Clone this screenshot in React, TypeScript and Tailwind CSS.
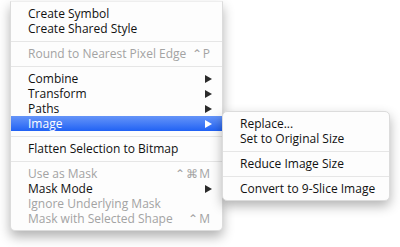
import React from "react";

type Item =
  | { sep: true }
  | { label: string; disabled?: boolean; shortcut?: string; sub?: boolean; active?: boolean };

const mainItems: Item[] = [
  { label: "Create Symbol" },
  { label: "Create Shared Style" },
  { sep: true },
  { label: "Round to Nearest Pixel Edge", disabled: true, shortcut: "⌃P" },
  { sep: true },
  { label: "Combine", sub: true },
  { label: "Transform", sub: true },
  { label: "Paths", sub: true },
  { label: "Image", sub: true, active: true },
  { sep: true },
  { label: "Flatten Selection to Bitmap" },
  { sep: true },
  { label: "Use as Mask", disabled: true, shortcut: "⌃⌘M" },
  { label: "Mask Mode", sub: true },
  { label: "Ignore Underlying Mask", disabled: true },
  { label: "Mask with Selected Shape", disabled: true, shortcut: "⌃M" },
];

const subItems: Item[] = [
  { label: "Replace..." },
  { label: "Set to Original Size" },
  { sep: true },
  { label: "Reduce Image Size" },
  { sep: true },
  { label: "Convert to 9-Slice Image" },
];

// small submenu triangle
const Arrow = ({ white }: { white?: boolean }) => (
  <svg width="7" height="8" viewBox="0 0 7 8" className="shrink-0">
    <path d="M0 0 L7 4 L0 8 Z" fill={white ? "#ffffff" : "#2b2b2b"} />
  </svg>
);

function MenuList({ items }: { items: Item[] }) {
  return (
    <>
      {items.map((it, i) => {
        if ("sep" in it) {
          return <div key={i} className="h-px bg-[#e6e6e6] mt-[5px] mb-[4px]" />;
        }
        return (
          <div
            key={i}
            className={
              "h-[15px] flex items-center pl-[17px] pr-[10px] " +
              (it.active
                ? "bg-gradient-to-b from-[#6594f8] to-[#2061f4] text-white"
                : it.disabled
                ? "text-[#a3a3a3]"
                : "text-[#111111]")
            }
          >
            <span className="flex-1 whitespace-nowrap">{it.label}</span>
            {it.shortcut && (
              <span className="text-[#a3a3a3] tracking-[1px] mr-px">{it.shortcut}</span>
            )}
            {it.sub && <Arrow white={it.active} />}
          </div>
        );
      })}
    </>
  );
}

export default function App() {
  return (
    <div
      className="w-[400px] h-[247px] bg-white overflow-hidden text-[12px] leading-[15px]"
      style={{ fontFamily: '"Open Sans", sans-serif' }}
    >
      <div className="relative ml-[10px] mt-[1px] w-[213px]">
        <div className="bg-[#fdfdfd] rounded-b-[5px] py-[4px] border border-[#dcdcdc] border-t-[#eeeeee] shadow-[0_6px_12px_rgba(0,0,0,0.3)]">
          <MenuList items={mainItems} />
        </div>
        <div className="absolute left-[212px] top-[110px] w-[168px] bg-[#fdfdfd] rounded-[5px] py-[4px] border border-[#dcdcdc] shadow-[0_5px_12px_rgba(0,0,0,0.3)]">
          <MenuList items={subItems} />
        </div>
      </div>
    </div>
  );
}
